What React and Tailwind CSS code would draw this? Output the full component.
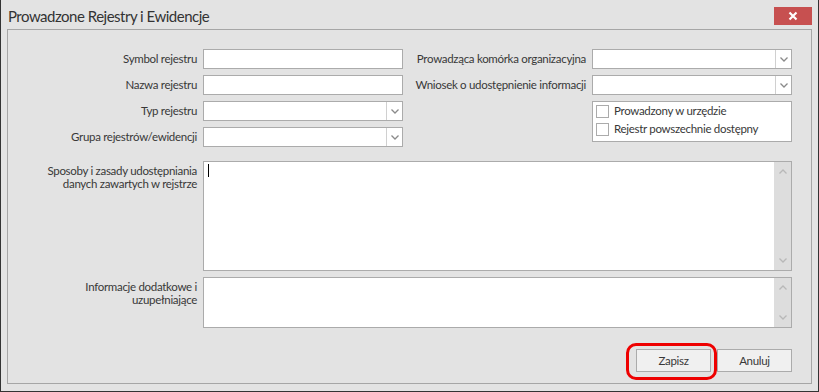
import React from "react";

const font = { fontFamily: 'Lato, "Noto Sans", sans-serif' };

function Chevron({ className = "" }) {
  return (
    <svg width="8" height="5" viewBox="0 0 8 5" className={className}>
      <path d="M0.5 0.5 L4 4 L7.5 0.5" fill="none" stroke="currentColor" strokeWidth="1.3" />
    </svg>
  );
}

const txt = "text-[11.5px] tracking-[-0.3px] leading-[14px] text-[#383838]";
const txt2 = "text-[11.5px] tracking-[-0.3px] leading-[13px] text-[#383838]";

function Label({ children, className = "" }) {
  return (
    <div className={"w-[189px] shrink-0 text-right " + txt2 + " " + className}>
      {children}
    </div>
  );
}

function TextInput() {
  return <div className="w-[200px] h-[20px] bg-white border border-[#ababab]" />;
}

function Combo() {
  return (
    <div className="w-[200px] h-[20px] bg-white border border-[#ababab] flex">
      <div className="flex-1" />
      <div className="w-[16px] border-l border-[#d0d0d0] flex items-center justify-center text-[#8a8a8a]">
        <Chevron />
      </div>
    </div>
  );
}

function Row({ label, children, labelW = "w-[189px]" }) {
  return (
    <div className="flex items-center gap-[6px] h-[20px]">
      <div className={labelW + " shrink-0 text-right whitespace-nowrap " + txt}>{label}</div>
      {children}
    </div>
  );
}

function Check({ label }) {
  return (
    <div className="flex items-center h-[18px]">
      <div className="w-[13px] h-[13px] border border-[#ababab] bg-white" />
      <span className={"ml-[5px] whitespace-nowrap " + txt}>{label}</span>
    </div>
  );
}

function Memo({ h, cursor }) {
  return (
    <div className={"w-[589px] bg-white border border-[#ababab] flex " + h}>
      <div className="flex-1 relative">
        {cursor && <div className="absolute left-[4px] top-[2px] w-[1px] h-[13px] bg-black" />}
      </div>
      <div className="w-[17px] bg-[#dddddd] flex flex-col justify-between items-center py-[7px] text-[#b8b8b8]">
        <Chevron className="rotate-180" />
        <Chevron />
      </div>
    </div>
  );
}

export default function App() {
  return (
    <div
      className="w-[819px] h-[392px] bg-[#e3e3e3] border-x border-b border-[#333333] flex flex-col"
      style={font}
    >
      <div className="h-[29px] shrink-0 flex items-start justify-between pl-[7px] pr-[6px]">
        <div className="text-[15px] tracking-[-0.5px] leading-[20px] text-[#333] mt-[6px]">Prowadzone Rejestry i Ewidencje</div>
        <div className="mt-[7px] w-[38px] h-[18px] bg-[#c75050] flex items-center justify-center">
          <svg width="10" height="10" viewBox="0 0 10 10">
            <path d="M1.5 1.5 L8.5 8.5 M8.5 1.5 L1.5 8.5" stroke="white" strokeWidth="2.2" />
          </svg>
        </div>
      </div>
      <div className="mx-[6px] h-[355px] border border-[#a6a6a6] flex flex-col pt-[19px]">
        <div className="flex">
          <div className="flex flex-col gap-[6px]">
            <Row label="Symbol rejestru"><TextInput /></Row>
            <Row label="Nazwa rejestru"><TextInput /></Row>
            <Row label="Typ rejestru"><Combo /></Row>
            <Row label="Grupa rejestrów/ewidencji"><Combo /></Row>
          </div>
          <div className="flex flex-col gap-[6px]">
            <Row label="Prowadząca komórka organizacyjna" labelW="w-[183px]"><Combo /></Row>
            <Row label="Wniosek o udostępnienie informacji" labelW="w-[183px]"><Combo /></Row>
            <div className="flex gap-[6px]">
              <div className="w-[183px]" />
              <div className="w-[200px] h-[41px] bg-white border border-[#ababab] flex flex-col pl-[3px]">
                <Check label="Prowadzony w urzędzie" />
                <Check label="Rejestr powszechnie dostępny" />
              </div>
            </div>
          </div>
        </div>
        <div className="mt-[14px] flex gap-[6px]">
          <Label className="pt-[3px]">Sposoby i zasady udostępniania<br />danych zawartych w rejstrze</Label>
          <Memo h="h-[110px]" cursor />
        </div>
        <div className="mt-[6px] flex gap-[6px]">
          <Label className="pt-[3px]">Informacje dodatkowe i<br />uzupełniające</Label>
          <Memo h="h-[51px]" />
        </div>
        <div className="mt-[21px] flex justify-end gap-[6px] pr-[19px]">
          <div className="relative">
            <div className={"w-[75px] h-[23px] bg-[#f0f0f0] border border-[#ababab] flex items-center justify-center " + txt}>Zapisz</div>
            <div className="absolute left-[-10px] top-[-6px] w-[91px] h-[37px] border-[3px] border-[#ee0000] rounded-[10px]" />
          </div>
          <div className={"w-[75px] h-[23px] bg-[#f0f0f0] border border-[#ababab] flex items-center justify-center " + txt}>Anuluj</div>
        </div>
      </div>
    </div>
  );
}
